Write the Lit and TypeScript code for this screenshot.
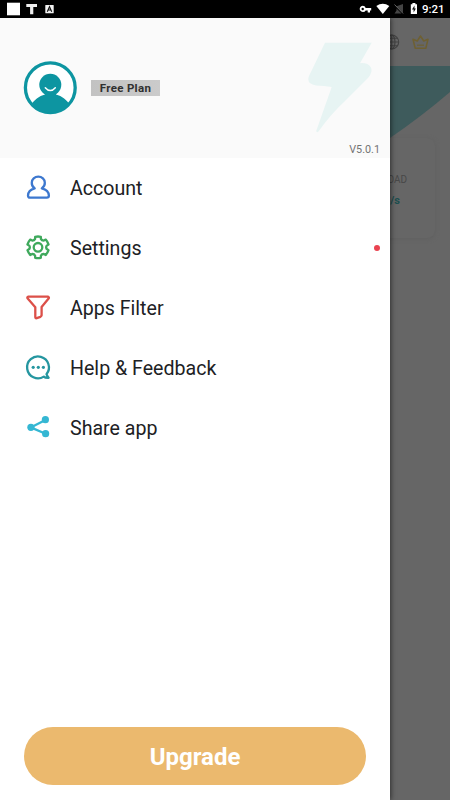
import { LitElement, html, css, svg } from "lit";
import { customElement } from "lit/decorators.js";

const line = (color: string, body: unknown) => html`
  <svg class="icon" viewBox="0 0 24 24" fill="none" stroke=${color} stroke-width="2.3"
    stroke-linecap="round" stroke-linejoin="round">${body}</svg>`;

const gearPath = (() => {
  const pts: string[] = [];
  for (let i = 0; i < 6; i++) {
    const at = (deg: number, r: number) => {
      const a = ((i * 60 + deg - 90) * Math.PI) / 180;
      return `${(12 + r * Math.cos(a)).toFixed(2)} ${(12.3 + r * Math.sin(a)).toFixed(2)}`;
    };
    pts.push(`${i ? "L" : "M"}${at(-15, 10.9)} Q${at(0, 11.1)} ${at(15, 10.9)} L${at(19, 8.9)} Q${at(30, 7.6)} ${at(41, 8.9)}`);
  }
  return pts.join(" ") + "Z";
})();

const items = [
  {
    label: "Account",
    icon: line("#3d78cf", svg`<path d="M8.7 13.4 C6.5 11.8 5.6 9.7 5.8 7.6 A6.5 6 0 0 1 18.8 7.6 C19 9.7 18 11.8 15.8 13.4 C20 14.5 22.8 17.3 22.9 20.6 Q22.9 22.7 20.8 22.7 H4 Q2 22.7 2 20.6 C2.1 17.3 4.6 14.5 8.7 13.4Z"/>`),
  },
  {
    label: "Settings",
    dot: true,
    icon: line("#3fa95c", svg`<path d=${gearPath}/><circle cx="12" cy="12.3" r="4.3"/>`),
  },
  {
    label: "Apps Filter",
    icon: line("#dc5049", svg`<path d="M2.3 1.7 H22.2 Q23.4 2.3 22.6 3.6 L15.6 12 V20.2 Q15.4 21.2 14.4 21.8 L10.7 23.2 Q9.3 23.5 9.3 22 V12.3 L1.5 3.3 Q.9 2 2.3 1.7Z"/>`),
  },
  {
    label: "Help & Feedback",
    icon: line("#2596a0", svg`<path d="M20.5 19.2 A10.9 10.9 0 1 0 17.8 21.6 Q19 22.9 22.6 22.8 Q21.3 21.3 20.5 19.2Z"/>
      <g fill="#2596a0" stroke="none"><circle cx="7.2" cy="12.3" r="1.6"/><circle cx="12.3" cy="12.3" r="1.6"/><circle cx="17.4" cy="12.3" r="1.6"/></g>`),
  },
  {
    label: "Share app",
    icon: line("#35b7d3", svg`<path d="M19.4 4.9 L4.7 12.4 L19.6 18.7"/>
      <g fill="#35b7d3" stroke="none"><circle cx="19.4" cy="4.7" r="3.6"/><circle cx="4.9" cy="12.3" r="3.6"/><circle cx="19.6" cy="18.7" r="3.6"/></g>`),
  },
];

@customElement("status-bar")
class StatusBar extends LitElement {
  static styles = css`
    :host { display: flex; align-items: center; height: 18px; background: #000; color: #fff; }
    svg { display: block; }
    .right { margin-left: auto; }
    .time { font: 500 11.5px/18px Roboto, sans-serif; width: 28px; white-space: nowrap; }
  `;
  render() {
    return html`
      <svg width="60" height="18" viewBox="0 0 60 18">
        <rect x="7" y="2.7" width="13" height="12.6" fill="#fff"/>
        <path d="M26.3 4h10.7v3.1h-3.7v7.2h-3.2V7.1h-3.8z" fill="#eee"/>
        <rect x="45.3" y="5" width="8.4" height="8.3" rx=".5" fill="#f2f2f2"/>
        <path d="M47.3 11.7l2.2-5 2.2 5M48.2 10h2.6" fill="none" stroke="#111" stroke-width="1.1"/>
      </svg>
      <svg class="right" width="66" height="18" viewBox="356 0 66 18">
        <path fill-rule="evenodd" fill="#fff" d="M362.7 5.7a3.2 3.2 0 0 1 3 2.2h5.5v2.5h-1.2v2h-2.3v-2h-2a3.2 3.2 0 1 1-3-4.7zm0 2.1a1.2 1.2 0 1 0 0 2.4 1.2 1.2 0 0 0 0-2.4z"/>
        <path fill="#fff" d="M376.3 6.1q6.5-4.6 13 0l-6.5 7.8z"/>
        <path fill="#444" d="M403 4v8.8L396.5 6.3zM394.5 13.6l2-3v-2l5 5z"/>
        <path stroke="#666" stroke-width="1" d="M394.5 4.5l8.6 9"/>
        <path fill="#fff" d="M412.4 3.1h3v1.2h1.6v9.7h-6.2V4.3h1.6z"/>
        <path fill="#111" d="M414.5 5.5l-2.5 4h1.6v3l2.3-4h-1.4z"/>
      </svg>
      <span class="time">9:21</span>`;
  }
}

@customElement("home-page")
class HomePage extends LitElement {
  static styles = css`
    :host { display: flex; flex-direction: column; background: #666; font-family: Roboto, sans-serif; overflow: hidden; }
    .bar { height: 48px; display: flex; justify-content: flex-end; flex: none; }
    .body { display: flex; flex-direction: column; }
    .wave { display: block; height: 72px; width: 450px; flex: none; }
    .card { width: 120px; height: 100px; align-self: flex-end; box-sizing: border-box; margin: 0 15px 0 0; border-radius: 8px;
      background: #666; box-shadow: 0 1px 4px #606060; padding: 36px 28px 0 0; text-align: right; }
    .name { font-size: 10px; line-height: 12px; color: #484848; }
    .rate { font-size: 11px; line-height: 14px; font-weight: 700; color: #1c4e4f; margin: 8px 7px 0 0; }
  `;
  render() {
    return html`
      <div class="bar">
        <svg width="90" height="48" viewBox="360 18 90 48" fill="none">
          <g stroke="#424242" stroke-width="1.1">
            <circle cx="391.7" cy="42" r="7"/><ellipse cx="391.7" cy="42" rx="3.3" ry="7"/>
            <path d="M384.7 42h14M386 38.3h11.5M386 45.7h11.5M391.7 35v14"/>
          </g>
          <path d="M415.2 48.3L413 39.3L417.3 41L420.5 36L423.7 41L428 39.3L425.8 48.3Z" stroke="#6e6032" stroke-width="1.5" stroke-linejoin="round"/>
          <path d="M417 45.2h7" stroke="#6e6032" stroke-width="1.2"/>
        </svg>
      </div>
      <div class="body">
        <svg class="wave" viewBox="0 66 450 72"><path d="M0 66H450V92Q422 116 390 138H0Z" fill="#3e5b5c"/></svg>
        <div class="card"><div class="name">DOWNLOAD</div><div class="rate">KB/s</div></div>
      </div>`;
  }
}

@customElement("side-drawer")
class SideDrawer extends LitElement {
  static styles = css`
    :host { display: flex; flex-direction: column; background: #fff; font-family: Roboto, sans-serif; color: #202124; box-shadow: 1px 0 5px rgba(0, 0, 0, .55); }
    .head { display: flex; height: 140px; background: #fafafa; flex: none; }
    .avatar { width: 54px; height: 54px; margin: 43px 0 0 23px; flex: none; }
    .plan { width: 69px; height: 16px; margin: 62px 0 0 14px; background: linear-gradient(90deg, #c2c2c2, #cbcbcb); font: 700 11.5px/17px Roboto, sans-serif; letter-spacing: .3px; text-align: center; color: #303030; white-space: nowrap; }
    .brand { display: flex; flex-direction: column; align-items: flex-end; margin: 24px 10px 0 auto; }
    .bolt { width: 66px; height: 92px; margin-right: 6px; }
    .version { font-size: 10.8px; line-height: 14px; color: #737373; margin-top: 9px; }
    .list { display: flex; flex-direction: column; }
    .row { display: flex; align-items: center; height: 60px; padding: 0 10px 0 26px; }
    .icon { width: 24px; height: 24px; margin-top: -2px; overflow: visible; flex: none; }
    .label { margin-left: 20px; font-size: 19.6px; line-height: 28px; padding-top: 1px; }
    .dot { width: 6px; height: 6px; border-radius: 50%; background: #ea4350; margin-left: auto; }
    .upgrade { margin: auto 24px 15px; height: 58px; border: 0; border-radius: 29px; background: #ebb96e; color: #fff; font: 700 24px/60px Roboto, sans-serif; padding: 0; }
  `;
  render() {
    return html`
      <div class="head">
        <svg class="avatar" viewBox="23 61 54 54">
          <defs><clipPath id="face"><circle cx="50.3" cy="87.7" r="25"/></clipPath></defs>
          <circle cx="50.3" cy="87.7" r="24.9" fill="#fff" stroke="#0d95a1" stroke-width="3.3"/>
          <g clip-path="url(#face)" fill="#0d95a1">
            <circle cx="50.3" cy="84.7" r="11"/>
            <path d="M45 92v2.5C39 96 34 100 31 105v12h39v-12c-3-5-8-9-14-10.5V92z"/>
          </g>
          <path d="M45.3 87.7Q50.3 93.5 55.3 87.7" fill="none" stroke="#fff" stroke-width="1.5" stroke-linecap="round"/>
        </svg>
        <div class="plan">Free Plan</div>
        <div class="brand">
          <svg class="bolt" viewBox="308 42 66 92"><path fill="#e7f4f3" d="M325 42.7H371.7L360 63.2Q368 62.5 371 67.5Q373 73 367 79L345 101Q330 115 318.5 131.5Q316.500 133 316.2 131L331.7 87Q324 85.5 316 85.5Q306 84 309 76Z"/></svg>
          <div class="version">V5.0.1</div>
        </div>
      </div>
      <nav class="list">
        ${items.map((i) => html`<div class="row">${i.icon}<span class="label">${i.label}</span>${i.dot ? html`<span class="dot"></span>` : ""}</div>`)}
      </nav>
      <button class="upgrade">Upgrade</button>`;
  }
}

@customElement("app-root")
class AppRoot extends LitElement {
  static styles = css`
    :host { display: flex; flex-direction: column; width: 450px; height: 800px; overflow: hidden; }
    .stage { display: grid; grid-template: 782px / 390px 60px; overflow: hidden; }
    home-page { grid-area: 1 / 1 / 2 / 3; }
    side-drawer { grid-area: 1 / 1; z-index: 1; }
  `;
  render() {
    return html`<status-bar></status-bar>
      <div class="stage"><home-page></home-page><side-drawer></side-drawer></div>`;
  }
}
